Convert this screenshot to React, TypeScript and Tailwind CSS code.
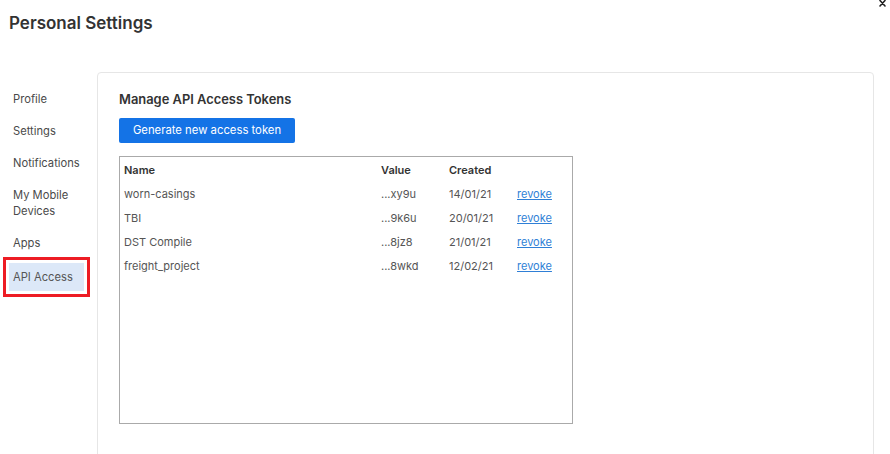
import React from 'react';

const navItems = ['Profile', 'Settings', 'Notifications', 'My Mobile Devices', 'Apps', 'API Access'];

const tokens = [
  { name: 'worn-casings', value: '...xy9u', created: '14/01/21' },
  { name: 'TBI', value: '...9k6u', created: '20/01/21' },
  { name: 'DST Compile', value: '...8jz8', created: '21/01/21' },
  { name: 'freight_project', value: '...8wkd', created: '12/02/21' },
];

export default function App() {
  return (
    <div className="relative w-[890px] h-[454px] overflow-hidden bg-white text-[#333] font-['Inter',sans-serif]">
      {/* Close */}
      <button className="absolute right-[4px] top-0 w-[8px] h-[7px] flex items-center justify-center" aria-label="Close">
        <svg width="7" height="7" viewBox="0 0 7 7" stroke="#222" strokeWidth="1.6" strokeLinecap="round">
          <path d="M1 0.5 L6 6 M6 0.5 L1 6" />
        </svg>
      </button>

      {/* Header */}
      <h1 className="pl-[9px] pt-[12px] text-[17px] font-semibold leading-[22px] text-[#333]">Personal Settings</h1>

      <div className="flex mt-[38px]">
        {/* Sidebar */}
        <nav className="w-[97px] shrink-0 pt-[11px] flex flex-col text-[11.2px] leading-[16px] text-[#4a4a4a]">
          {navItems.map((item) => {
            const active = item === 'API Access';
            return active ? (
              <div key={item} className="ml-[3px] w-[87px] border-[3px] border-[#ed1c24] p-[3px] mt-[-2px]">
                <div className="bg-[#dce8f8] px-[4px] py-[6px] text-[#555]">{item}</div>
              </div>
            ) : (
              <div key={item} className="pl-[13px] pr-[4px] py-[8px] w-[90px]">{item}</div>
            );
          })}
        </nav>

        {/* Card */}
        <div className="w-[777px] h-[400px] border border-[#e6e6e6] rounded-[4px] pl-[21px] pt-[19px]">
          <h2 className="text-[12.9px] font-semibold leading-[16px] text-[#333]">Manage API Access Tokens</h2>
          <button className="mt-[10px] w-[176px] h-[25px] bg-[#1473e6] rounded-[2px] text-white text-[11.3px]">
            Generate new access token
          </button>

          <div className="mt-[13px] w-[454px] h-[268px] border border-[#aaa] px-[4px] pt-[4px]">
            <table className="text-[11px] leading-[16px] border-collapse">
              <thead>
                <tr className="h-[18px]">
                  <th className="w-[257px] text-left font-semibold text-[#333]">Name</th>
                  <th className="w-[68px] text-left font-semibold text-[#333]">Value</th>
                  <th className="w-[68px] text-left font-semibold text-[#333]">Created</th>
                  <th className="text-left"></th>
                </tr>
              </thead>
              <tbody>
                {tokens.map((t) => (
                  <tr key={t.name} className="h-[24px] text-[#555]">
                    <td className="pt-[6px]">{t.name}</td>
                    <td className="pt-[6px]">{t.value}</td>
                    <td className="pt-[6px]">{t.created}</td>
                    <td className="pt-[6px]">
                      <a href="#" className="text-[#2f7fd6] underline">revoke</a>
                    </td>
                  </tr>
                ))}
              </tbody>
            </table>
          </div>
        </div>
      </div>
    </div>
  );
}
